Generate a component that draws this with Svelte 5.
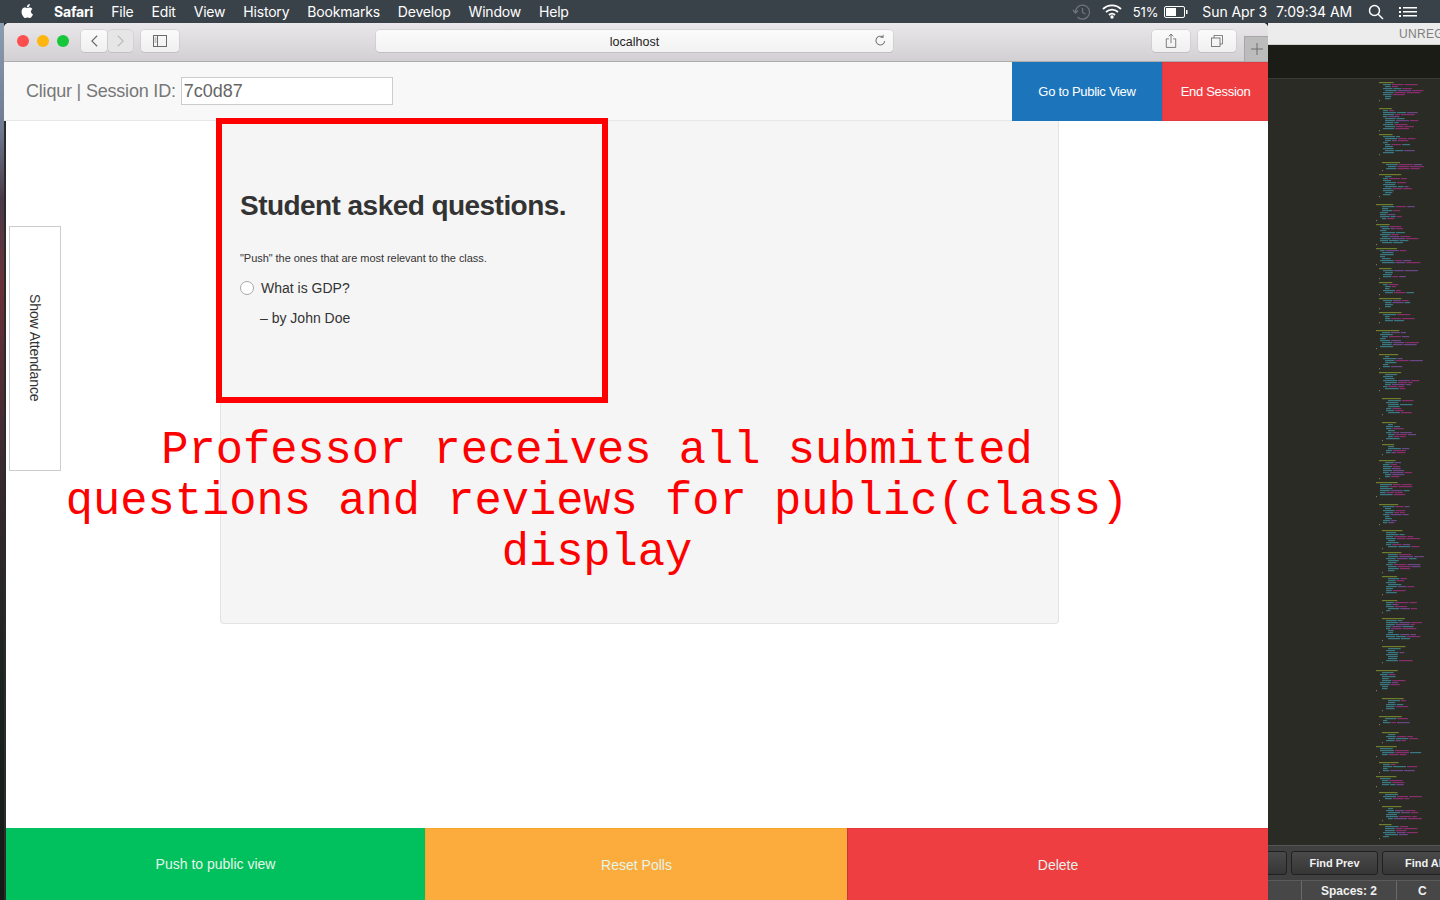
<script>
  const menus = ['File', 'Edit', 'View', 'History', 'Bookmarks', 'Develop', 'Window', 'Help'];

  function buildMinimap() {
    let seed = 17;
    const rnd = () => {
      seed = (seed * 1103515245 + 12345) & 0x7fffffff;
      return seed / 0x7fffffff;
    };
    const teal = '#3f8c9c', pink = '#a0307e', green = '#7f9430', gray = '#8c8c84', purple = '#7c4fa0';
    const rects = [];
    let y = 2;
    while (y < 758) {
      const block = 3 + Math.floor(rnd() * 8);
      const indent = 2 + Math.floor(rnd() * 3) * 3;
      rects.push({ x: indent, y, w: 12 + rnd() * 12, c: green });
      y += 2;
      for (let i = 0; i < block && y < 758; i++) {
        let x = indent + 4 + Math.floor(rnd() * 2) * 2;
        const parts = 1 + Math.floor(rnd() * 3);
        for (let p = 0; p < parts; p++) {
          const w = 4 + rnd() * 10;
          const r = rnd();
          rects.push({ x, y, w, c: p === 0 ? teal : r < 0.6 ? pink : r < 0.85 ? purple : teal });
          x += w + 1;
        }
        y += 2;
      }
      rects.push({ x: indent, y, w: 1, c: gray });
      y += 4 + Math.floor(rnd() * 3) * 2;
    }
    return rects;
  }
  const minimap = buildMinimap();
</script>

<div class="desktop">
  <header class="menubar">
    <div class="menu-left">
      <svg class="apple" viewBox="0 0 14 16" width="14" height="16"><path fill="#fff" d="M10.9 8.5c0-1.7 1.4-2.5 1.5-2.6-.8-1.200-2.100-1.400-2.500-1.400-1.100-.1-2.100.6-2.600.6-.6 0-1.400-.6-2.300-.6-1.200 0-2.300.7-2.900 1.700-1.200 2.100-.3 5.300.9 7 .6.8 1.300 1.800 2.200 1.800.9 0 1.200-.6 2.300-.6 1.100 0 1.400.6 2.300.6 1 0 1.600-.9 2.200-1.700.7-1 1-1.900 1-2-.1 0-2.100-.8-2.100-2.800zM9.100 3.300c.5-.6.800-1.400.7-2.300-.7 0-1.600.5-2.100 1.100-.5.500-.9 1.400-.8 2.200.8.1 1.700-.4 2.200-1z"/></svg>
      <span class="menu-item app">Safari</span>
      {#each menus as m}
        <span class="menu-item">{m}</span>
      {/each}
    </div>
    <div class="menu-right">
      <svg class="history" viewBox="0 0 20 18" width="20" height="18" fill="none" stroke="#70767c" stroke-width="1.200"><path d="M3.500 9a7 7 0 1 1 2 5"/><path d="M1 7l2.500 3L6 7.500" /><path d="M10.500 5v4.500l3 1.500"/></svg>
      <svg class="wifi" viewBox="0 0 20 15" width="20" height="15" fill="none" stroke="#fff" stroke-width="1.800"><path d="M1 5a13 13 0 0 1 18 0"/><path d="M4 8a9 9 0 0 1 12 0"/><path d="M7 11a4.500 4.500 0 0 1 6 0"/><circle cx="10" cy="13" r=".8" fill="#fff"/></svg>
      <span class="status pct">51%</span>
      <svg class="battery" viewBox="0 0 24 12" width="24" height="12"><rect x=".5" y=".5" width="20" height="11" rx="1.500" fill="none" stroke="#fff"/><rect x="2" y="2" width="10" height="8" fill="#fff"/><rect x="22" y="4" width="1.500" height="4" fill="#fff"/></svg>
      <span class="status date">Sun Apr 3</span>
      <span class="status time">7:09:34 AM</span>
      <svg class="search" viewBox="0 0 16 16" width="16" height="16" fill="none" stroke="#fff" stroke-width="1.500"><circle cx="6.500" cy="6.500" r="5"/><path d="M10.200 10.200L15 15"/></svg>
      <svg class="list" viewBox="0 0 18 12" width="18" height="12" fill="#fff"><rect x="0" y="1" width="2" height="2"/><rect x="4" y="1" width="14" height="1.500"/><rect x="0" y="5" width="2" height="2"/><rect x="4" y="5" width="14" height="1.500"/><rect x="0" y="9" width="2" height="2"/><rect x="4" y="9" width="14" height="1.500"/></svg>
    </div>
  </header>

  <div class="workspace">
    <div class="wallpaper"></div>

    <section class="safari">
      <div class="toolbar">
        <div class="lights">
          <span class="light red"></span>
          <span class="light yellow"></span>
          <span class="light green"></span>
        </div>
        <div class="nav-pair">
          <span class="tool-btn back">
            <svg viewBox="0 0 10 16" width="9" height="14" fill="none" stroke="#6b6b6b" stroke-width="1.300"><path d="M8 2L2 8l6 6"/></svg>
          </span>
          <span class="tool-btn forward">
            <svg viewBox="0 0 10 16" width="9" height="14" fill="none" stroke="#bcbcbc" stroke-width="1.300"><path d="M2 2l6 6-6 6"/></svg>
          </span>
        </div>
        <span class="tool-btn sidebar">
          <svg viewBox="0 0 14 12" width="14" height="12" fill="none" stroke="#6b6b6b"><rect x=".5" y=".5" width="13" height="11"/><path d="M4.500 .5v11"/><path d="M1.500 3h2M1.500 5h2M1.500 7h2" stroke-width=".7"/></svg>
        </span>
        <div class="urlbar">
          <span class="url">localhost</span>
          <svg class="reload" viewBox="0 0 14 14" width="13" height="13" fill="none" stroke="#777" stroke-width="1.100"><path d="M11.500 7.500a4.700 4.700 0 1 1-2-4.300"/><path d="M9.800 .8v2.800H7" /></svg>
        </div>
        <span class="tool-btn share">
          <svg viewBox="0 0 14 18" width="12" height="16" fill="none" stroke="#6b6b6b"><path d="M4.500 6.500H1.500v10h11v-10h-3"/><path d="M7 11.500V1M4.300 3.500L7 1l2.700 2.500"/></svg>
        </span>
        <span class="tool-btn tabs">
          <svg viewBox="0 0 14 14" width="12" height="12" fill="none" stroke="#6b6b6b"><rect x=".5" y="3.500" width="10" height="10"/><path d="M3.500 3.500v-3h10v10h-3"/></svg>
        </span>
        <span class="plus-tab">
          <svg viewBox="0 0 12 12" width="12" height="12" stroke="#6f6f6f"><path d="M6 0v12M0 6h12"/></svg>
        </span>
      </div>

      <div class="app-header">
        <div class="brand">
          <span class="brand-text">Cliqur | Session ID:</span>
          <span class="session-box">7c0d87</span>
        </div>
        <div class="header-actions">
          <button class="head-btn public">Go to Public View</button>
          <button class="head-btn end">End Session</button>
        </div>
      </div>

      <main class="page">
        <div class="page-body">
          <div class="side-col">
            <div class="attendance"><span>Show Attendance</span></div>
          </div>
          <div class="well">
            <h1>Student asked questions.</h1>
            <p class="hint">"Push" the ones that are most relevant to the class.</p>
            <div class="question">
              <span class="radio"></span>
              <span>What is GDP?</span>
            </div>
            <p class="author">– by John Doe</p>
          </div>
        </div>
        <div class="bottom-actions">
          <button class="bottom push">Push to public view</button>
          <button class="bottom reset">Reset Polls</button>
          <button class="bottom delete">Delete</button>
        </div>
      </main>
    </section>

    <aside class="editor">
      <div class="ed-title">UNREG</div>
      <div class="ed-tabs"></div>
      <div class="ed-code">
        <svg class="minimap" width="63" height="760" viewBox="0 0 63 760">
          {#each minimap as r}
            <rect x={r.x} y={r.y} width={r.w} height="1.200" fill={r.c} opacity=".8" />
          {/each}
        </svg>
      </div>
      <div class="ed-find">
        <span class="find-btn blank"></span>
        <span class="find-btn prev">Find Prev</span>
        <span class="find-btn all">Find All</span>
      </div>
      <div class="ed-status">
        <span class="st-cell blank"></span>
        <span class="st-cell spaces">Spaces: 2</span>
        <span class="st-cell last">C</span>
      </div>
    </aside>
  </div>

  <div class="red-box"></div>
  <div class="annotation">Professor receives all submitted questions and reviews for public(class) display</div>
</div>

<style>
  :global(body) { margin: 0; background: #222; }
  * { box-sizing: border-box; }

  .desktop {
    position: relative;
    width: 1440px;
    height: 900px;
    overflow: hidden;
    display: flex;
    flex-direction: column;
    font-family: "Liberation Sans", Arial, sans-serif;
  }

  .menubar {
    height: 23px;
    flex: none;
    display: flex;
    justify-content: space-between;
    align-items: center;
    background: #3a4249;
    color: #fff;
    font-family: Inter, "Liberation Sans", sans-serif;
    font-size: 14px;
  }
  .menu-left { display: flex; align-items: center; padding-left: 20px; }
  .apple { margin-right: 20px; margin-top: -2px; }
  .menu-item { margin-right: 18px; letter-spacing: -0.2px; }
  .menu-item.app { font-weight: 700; }
  .menu-right { display: flex; align-items: center; padding-right: 23px; }
  .history { margin-right: 10px; }
  .wifi { margin-right: 11px; }
  .status { letter-spacing: -0.1px; }
  .pct { font-size: 13px; margin-right: 6px; }
  .battery { margin-right: 14px; }
  .date { margin-right: 9px; }
  .time { margin-right: 16px; }
  .search { margin-right: 15px; }

  .workspace { flex: 1; display: flex; min-height: 0; }
  .wallpaper {
    width: 4px;
    flex: none;
    background: linear-gradient(180deg, #8c9db0 0%, #6e7a90 12%, #4a3a48 20%, #6b3038 30%, #3a2a30 50%, #1c2420 75%, #141a16 100%);
  }

  .safari {
    width: 1264px;
    flex: none;
    display: flex;
    flex-direction: column;
    border-radius: 5px 5px 0 0;
    overflow: hidden;
    background: #fff;
  }

  .toolbar {
    position: relative;
    height: 39px;
    flex: none;
    display: flex;
    align-items: center;
    padding: 0 31px 3px 13px;
    background: linear-gradient(180deg, #e9e7e9, #d2d0d2);
    border-bottom: 1px solid #adadad;
  }
  .lights { display: flex; gap: 8px; margin-right: 12px; }
  .light { width: 12px; height: 12px; border-radius: 50%; }
  .light.red { background: #fc4e4f; }
  .light.yellow { background: #fdb60f; }
  .light.green { background: #17c73a; }

  .nav-pair { display: flex; gap: 1px; margin-right: 8px; }
  .tool-btn {
    height: 22px;
    display: inline-flex;
    align-items: center;
    justify-content: center;
    background: linear-gradient(180deg, #fbfbfb, #f0f0f0);
    border-radius: 4px;
    box-shadow: 0 0 0 .5px #c6c6c6, 0 1px 0 #bdbdbd;
  }
  .back { width: 26px; }
  .forward { width: 25px; background: #e7e6e7; }
  .sidebar { width: 38px; margin-right: 197px; }
  .urlbar {
    position: relative;
    width: 517px;
    height: 22px;
    margin-right: 259px;
    display: flex;
    align-items: center;
    justify-content: center;
    background: linear-gradient(180deg, #fbfbfb, #f2f2f2);
    border-radius: 4px;
    box-shadow: 0 0 0 .5px #c6c6c6, 0 1px 0 #bdbdbd;
    font-size: 12.500px;
    color: #222;
  }
  .url { margin-top: 2px; }
  .reload { position: absolute; right: 6px; top: 4px; }
  .share { width: 38px; margin-right: 8px; }
  .tabs { width: 38px; }
  .plus-tab {
    position: absolute;
    right: 0;
    bottom: 0;
    width: 24px;
    height: 25px;
    display: flex;
    align-items: center;
    justify-content: center;
    background: #bdbcbd;
    border-left: 1px solid #a6a6a6;
    border-top: 1px solid #a6a6a6;
  }

  .app-header {
    height: 59px;
    flex: none;
    display: flex;
    justify-content: space-between;
    background: #f8f8f8;
    border-bottom: 1px solid #e7e7e7;
  }
  .brand { display: flex; align-items: center; padding-left: 22px; gap: 5px; }
  .brand-text { font-size: 18px; color: #777; letter-spacing: -0.2px; }
  .session-box {
    width: 212px;
    height: 28px;
    display: flex;
    align-items: center;
    padding-left: 2px;
    background: #fff;
    border: 1px solid #ccc;
    font-size: 18px;
    color: #666;
  }
  .header-actions { display: flex; height: 59px; }
  .head-btn {
    border: 0;
    padding: 0;
    color: #fff;
    font: 13px "Liberation Sans", Arial, sans-serif;
    letter-spacing: -0.3px;
  }
  .head-btn.public { width: 150px; background: #1c75bb; }
  .head-btn.end { width: 106px; background: #ef3e42; border-left: 1px solid #e2383d; border-top: 1px solid #e23a3e; border-bottom: 1px solid #e23a3e; }

  .page {
    flex: 1;
    min-height: 0;
    display: flex;
    flex-direction: column;
    justify-content: space-between;
    border-left: 2px solid #2b2b2b;
    background: #fff;
  }
  .page-body { display: flex; align-items: flex-start; }
  .side-col { width: 214px; flex: none; padding: 105px 0 0 3px; }
  .attendance {
    width: 52px;
    height: 245px;
    display: flex;
    align-items: center;
    justify-content: center;
    background: #fff;
    border: 1px solid #ccc;
    font-size: 14px;
    color: #333;
  }
  .attendance span { writing-mode: vertical-rl; letter-spacing: -0.1px; margin-top: -1px; }

  .well {
    width: 839px;
    height: 503px;
    padding: 69px 19px 0 19px;
    background: #f5f5f5;
    border: 1px solid #e3e3e3;
    border-top: 0;
    border-radius: 0 0 4px 4px;
    color: #333;
  }
  h1 {
    margin: 0;
    font-size: 28px;
    line-height: 32px;
    font-weight: 700;
    letter-spacing: -0.55px;
  }
  .hint { margin: 29px 0 0; font-size: 11px; line-height: 14px; letter-spacing: -0.05px; }
  .question {
    display: flex;
    align-items: center;
    gap: 7px;
    margin-top: 14px;
    font-size: 14px;
    line-height: 18px;
  }
  .radio {
    width: 14px;
    height: 14px;
    border-radius: 50%;
    background: #fff;
    border: 1px solid #a8a8a8;
  }
  .author { margin: 12px 0 0 20px; font-size: 14px; line-height: 18px; }

  .bottom-actions { display: flex; height: 72px; flex: none; }
  .bottom {
    border: 0;
    padding: 0;
    color: #e6f4ea;
    font: 14px "Liberation Sans", Arial, sans-serif;
  }
  .bottom.push { width: 419px; background: #00c15d; }
  .bottom.reset { width: 422px; background: #fbac3d; border-top: 1px solid #f9a52c; border-left: 1px solid #f9a52c; }
  .bottom.delete { flex: 1; background: #ef3e42; border-left: 1px solid #d0343a; border-top: 1px solid #e0393d; }

  .editor {
    flex: 1;
    min-width: 0;
    display: flex;
    flex-direction: column;
    background: #272822;
  }
  .ed-title {
    height: 22px;
    flex: none;
    padding: 4px 0 0 131px;
    background: #ececec;
    border-bottom: 1px solid #cfcfcf;
    color: #7f7f7f;
    font-size: 12px;
    letter-spacing: .3px;
    white-space: nowrap;
    overflow: hidden;
  }
  .ed-tabs { height: 34px; flex: none; background: #1b1c15; border-bottom: 1px solid #3a3a36; }
  .ed-code { flex: 1; min-height: 0; position: relative; background: #2a2b25; padding: 1px 0 0 106px; overflow: hidden; }
  .minimap { display: block; }
  .ed-find {
    height: 35px;
    flex: none;
    display: flex;
    align-items: center;
    gap: 4px;
    background: #404040;
    border-top: 1px solid #555;
    overflow: hidden;
  }
  .find-btn {
    height: 24px;
    flex: none;
    display: flex;
    align-items: center;
    justify-content: center;
    background: linear-gradient(180deg, #4a4a4a, #363636);
    border: 1px solid #202020;
    border-radius: 3px;
    color: #f0f0f0;
    font-size: 11px;
    font-weight: 700;
  }
  .find-btn.blank { width: 22px; margin-left: -3px; }
  .find-btn.prev { width: 87px; }
  .find-btn.all { width: 80px; justify-content: flex-start; padding-left: 22px; white-space: nowrap; }
  .ed-status {
    height: 20px;
    flex: none;
    display: flex;
    background: #474747;
    border-top: 1px solid #5b5b5b;
    color: #f0f0f0;
    font-size: 12px;
    font-weight: 700;
  }
  .st-cell { display: flex; align-items: center; justify-content: center; border-right: 1px solid #6a6a6a; white-space: nowrap; }
  .st-cell.blank { width: 34px; }
  .st-cell.spaces { width: 95px; }
  .st-cell.last { flex: 1; justify-content: flex-start; padding-left: 21px; border-right: 0; overflow: hidden; }

  .red-box {
    position: absolute;
    left: 216px;
    top: 118px;
    width: 392px;
    height: 285px;
    border: 6px solid #fe0000;
  }
  .annotation {
    position: absolute;
    left: 47px;
    top: 426px;
    width: 1100px;
    text-align: center;
    font-family: "Liberation Mono", "Courier New", monospace;
    font-size: 45.400px;
    line-height: 51px;
    color: #fe0000;
  }
</style>
